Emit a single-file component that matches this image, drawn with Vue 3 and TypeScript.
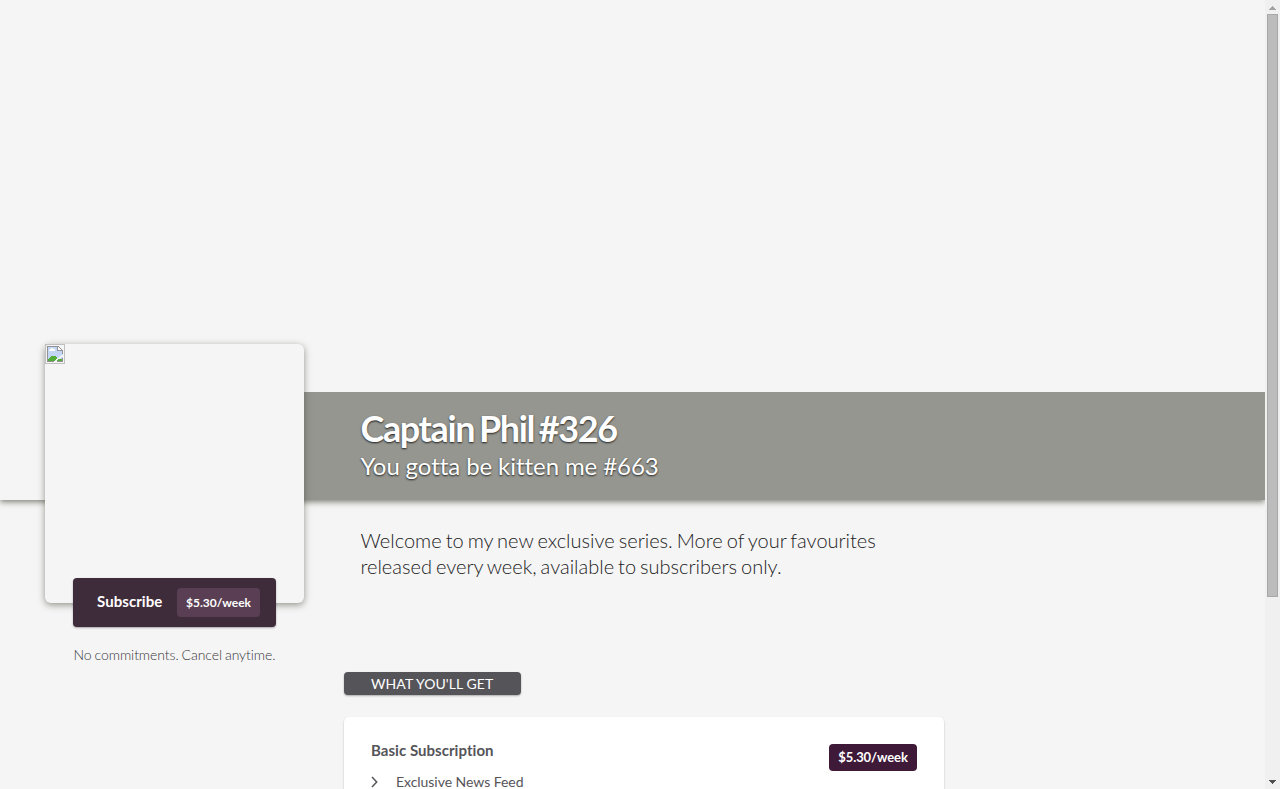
<script setup lang="ts">
interface Plan {
  name: string
  price: string
  features: string[]
}

const creator = {
  name: 'Captain Phil #326',
  tagline: 'You gotta be kitten me #663',
  intro: 'Welcome to my new exclusive series. More of your favourites released every week, available to subscribers only.',
}

const plan: Plan = {
  name: 'Basic Subscription',
  price: '$5.30/week',
  features: ['Exclusive News Feed'],
}
</script>

<template>
  <div class="window">
    <div class="page">
      <header class="hero">
        <div class="band">
          <h1>{{ creator.name }}</h1>
          <h2>{{ creator.tagline }}</h2>
        </div>
      </header>
      <div class="columns">
        <aside class="side">
          <div class="portrait">
            <svg class="broken" width="20" height="20" viewBox="0 0 20 20" shape-rendering="crispEdges">
              <rect x=".5" y=".5" width="19" height="19" fill="none" stroke="#c0c0c0" />
              <path d="M3 3h9l6 5v9H3z" fill="#c3d6f5" />
              <path d="M4 6h1V5h1V4h2v1h2v2H4z" fill="#fff" />
              <path d="M3 17v-2h1v-1h1v-1h1v-1h5v1h1v1h1v1h4v2z" fill="#54ad38" />
              <path d="M18 10v3h-2v1h-1v1h-2v1h-1v2H8v-1h2v-1h1v-1h1v-1h2v-1h1v-1h1v-1h2z" fill="#f5f5f5" />
              <path d="M2 2h11v1H3v14h6v1H2zM12 17h6v1h-6zM17 14h1v4h-1zM12 3h1v3h5v4h-1V7h-5zM13 2h1v1h-1zM14 3h1v1h-1zM15 4h1v1h-1zM16 5h1v1h-1z" fill="#919191" />
              <path d="M13 3h1v1h1v1h1v1h-3z" fill="#fff" />
            </svg>
          </div>
          <button class="subscribe" type="button">
            <span class="label">Subscribe</span>
            <span class="amount">{{ plan.price }}</span>
          </button>
          <p class="note">No commitments. Cancel anytime.</p>
        </aside>
        <main class="main">
          <p class="intro">{{ creator.intro }}</p>
          <div class="heading">WHAT YOU'LL GET</div>
          <section class="plan">
            <div class="details">
              <h3>{{ plan.name }}</h3>
              <ul>
                <li v-for="feature in plan.features" :key="feature">
                  <svg width="7" height="12" viewBox="0 0 7 12">
                    <path d="M1 1l4.700 5L1 11" fill="none" stroke="#555459" stroke-width="1.500" />
                  </svg>
                  <span>{{ feature }}</span>
                </li>
              </ul>
            </div>
            <span class="price">{{ plan.price }}</span>
          </section>
        </main>
      </div>
    </div>
    <div class="scrollbar">
      <svg class="arrow" width="7" height="4" viewBox="0 0 7 4" shape-rendering="crispEdges">
        <path d="M3 0h1v1h1v1h1v1h1v1H0V3h1V2h1V1h1z" fill="#a3a3a3" />
      </svg>
      <div class="thumb"></div>
      <svg class="arrow down" width="7" height="4" viewBox="0 0 7 4" shape-rendering="crispEdges">
        <path d="M0 0h7v1H6v1H5v1H4v1H3V3H2V2H1V1H0z" fill="#505050" />
      </svg>
    </div>
  </div>
</template>

<style>
body {
  margin: 0;
  background: #f5f5f5;
  overflow: hidden;
}
</style>

<style scoped>
.window {
  display: flex;
  height: 789px;
  overflow: hidden;
  background: #f5f5f5;
  color: #555459;
  font-family: Lato, "Liberation Sans", sans-serif;
}
.page {
  flex: 1;
  min-width: 0;
  overflow: hidden;
}
.hero {
  display: flex;
  flex-direction: column;
  justify-content: flex-end;
  height: 500px;
  box-shadow: 0 2px 6px rgba(50, 50, 35, .6);
  background: #f5f5f5;
}
.band {
  box-sizing: border-box;
  height: 108px;
  margin-left: 304px;
  padding: 14px 0 0 56.500px;
  background: #959690;
  color: #fff;
}
h1,
h2,
h3,
p,
ul {
  margin: 0;
  padding: 0;
}
h1 {
  font-size: 36px;
  line-height: 44px;
  font-weight: 700;
  letter-spacing: -1.400px;
  word-spacing: -2.500px;
  text-shadow: 0 1px 2px rgba(0, 0, 0, .8);
}
h2 {
  margin-top: 1px;
  font-size: 24px;
  line-height: 30px;
  font-weight: 400;
  letter-spacing: -.040px;
  word-spacing: -.200px;
  text-shadow: 0 1px 2px rgba(0, 0, 0, .8);
}
.columns {
  display: flex;
  align-items: flex-start;
}
.side {
  position: relative;
  display: flex;
  flex-direction: column;
  align-items: center;
  width: 259px;
  margin: -156px 40px 0 45px;
}
.portrait {
  width: 259px;
  height: 259px;
  border-radius: 6px;
  background: #f5f5f5;
  box-shadow: 0 2px 7px rgba(50, 50, 35, .5);
}
.broken {
  display: block;
}
.subscribe {
  display: flex;
  align-items: center;
  justify-content: space-between;
  box-sizing: border-box;
  width: 203px;
  height: 49px;
  margin-top: -25px;
  padding: 0 16px 0 24px;
  border: 0;
  border-radius: 4px;
  background: #3f2c3a;
  box-shadow: 0 1px 2px rgba(63, 44, 58, .4);
  color: #fff;
  font-family: inherit;
  font-weight: 700;
  white-space: nowrap;
}
.label {
  margin-top: -4px;
  font-size: 15px;
  line-height: 20px;
  letter-spacing: .060px;
}
.amount {
  width: 83px;
  border-radius: 4px;
  background: #5a3e53;
  font-size: 12px;
  line-height: 29px;
  text-align: center;
}
.note {
  margin-top: 18px;
  color: #38373b;
  font-size: 14px;
  line-height: 20px;
  font-weight: 300;
  letter-spacing: -.080px;
  word-spacing: -.700px;
  white-space: nowrap;
}
.main {
  width: 600px;
}
.intro {
  box-sizing: border-box;
  height: 172px;
  padding: 27px 40px 0 16.500px;
  color: #222123;
  font-size: 20px;
  line-height: 26px;
  font-weight: 300;
  word-spacing: -1.400px;
}
.heading {
  box-sizing: border-box;
  width: 177px;
  height: 23px;
  padding-left: 27px;
  border-radius: 4px;
  background: #555459;
  box-shadow: 0 1px 2px rgba(0, 0, 0, .3);
  color: #fff;
  font-size: 14px;
  line-height: 24px;
  letter-spacing: .070px;
}
.plan {
  display: flex;
  justify-content: space-between;
  align-items: flex-start;
  box-sizing: border-box;
  height: 200px;
  margin-top: 22px;
  padding: 27px;
  border-radius: 5px;
  background: #fff;
  box-shadow: 0 1px 2px rgba(0, 0, 0, .25);
}
h3 {
  margin-top: -4px;
  font-size: 15px;
  line-height: 20px;
  font-weight: 700;
  letter-spacing: .040px;
}
ul {
  margin-top: 12px;
  list-style: none;
}
li {
  display: flex;
  align-items: center;
  gap: 18px;
  font-size: 14px;
  line-height: 20px;
  letter-spacing: -.040px;
}
.price {
  width: 88px;
  border-radius: 4px;
  background: #3e1938;
  color: #fff;
  font-size: 13px;
  line-height: 27px;
  font-weight: 700;
  letter-spacing: -.100px;
  text-align: center;
}
.scrollbar {
  display: flex;
  flex-direction: column;
  align-items: center;
  box-sizing: border-box;
  width: 15px;
  padding: 6px 0 5px;
  background: #f0f0f0;
}
.arrow {
  flex: none;
}
.thumb {
  box-sizing: border-box;
  width: 11px;
  height: 583px;
  margin-top: 4px;
  border: 1px solid #a8a8a8;
  background: #bcbcbc;
}
.down {
  margin-top: auto;
}
</style>
